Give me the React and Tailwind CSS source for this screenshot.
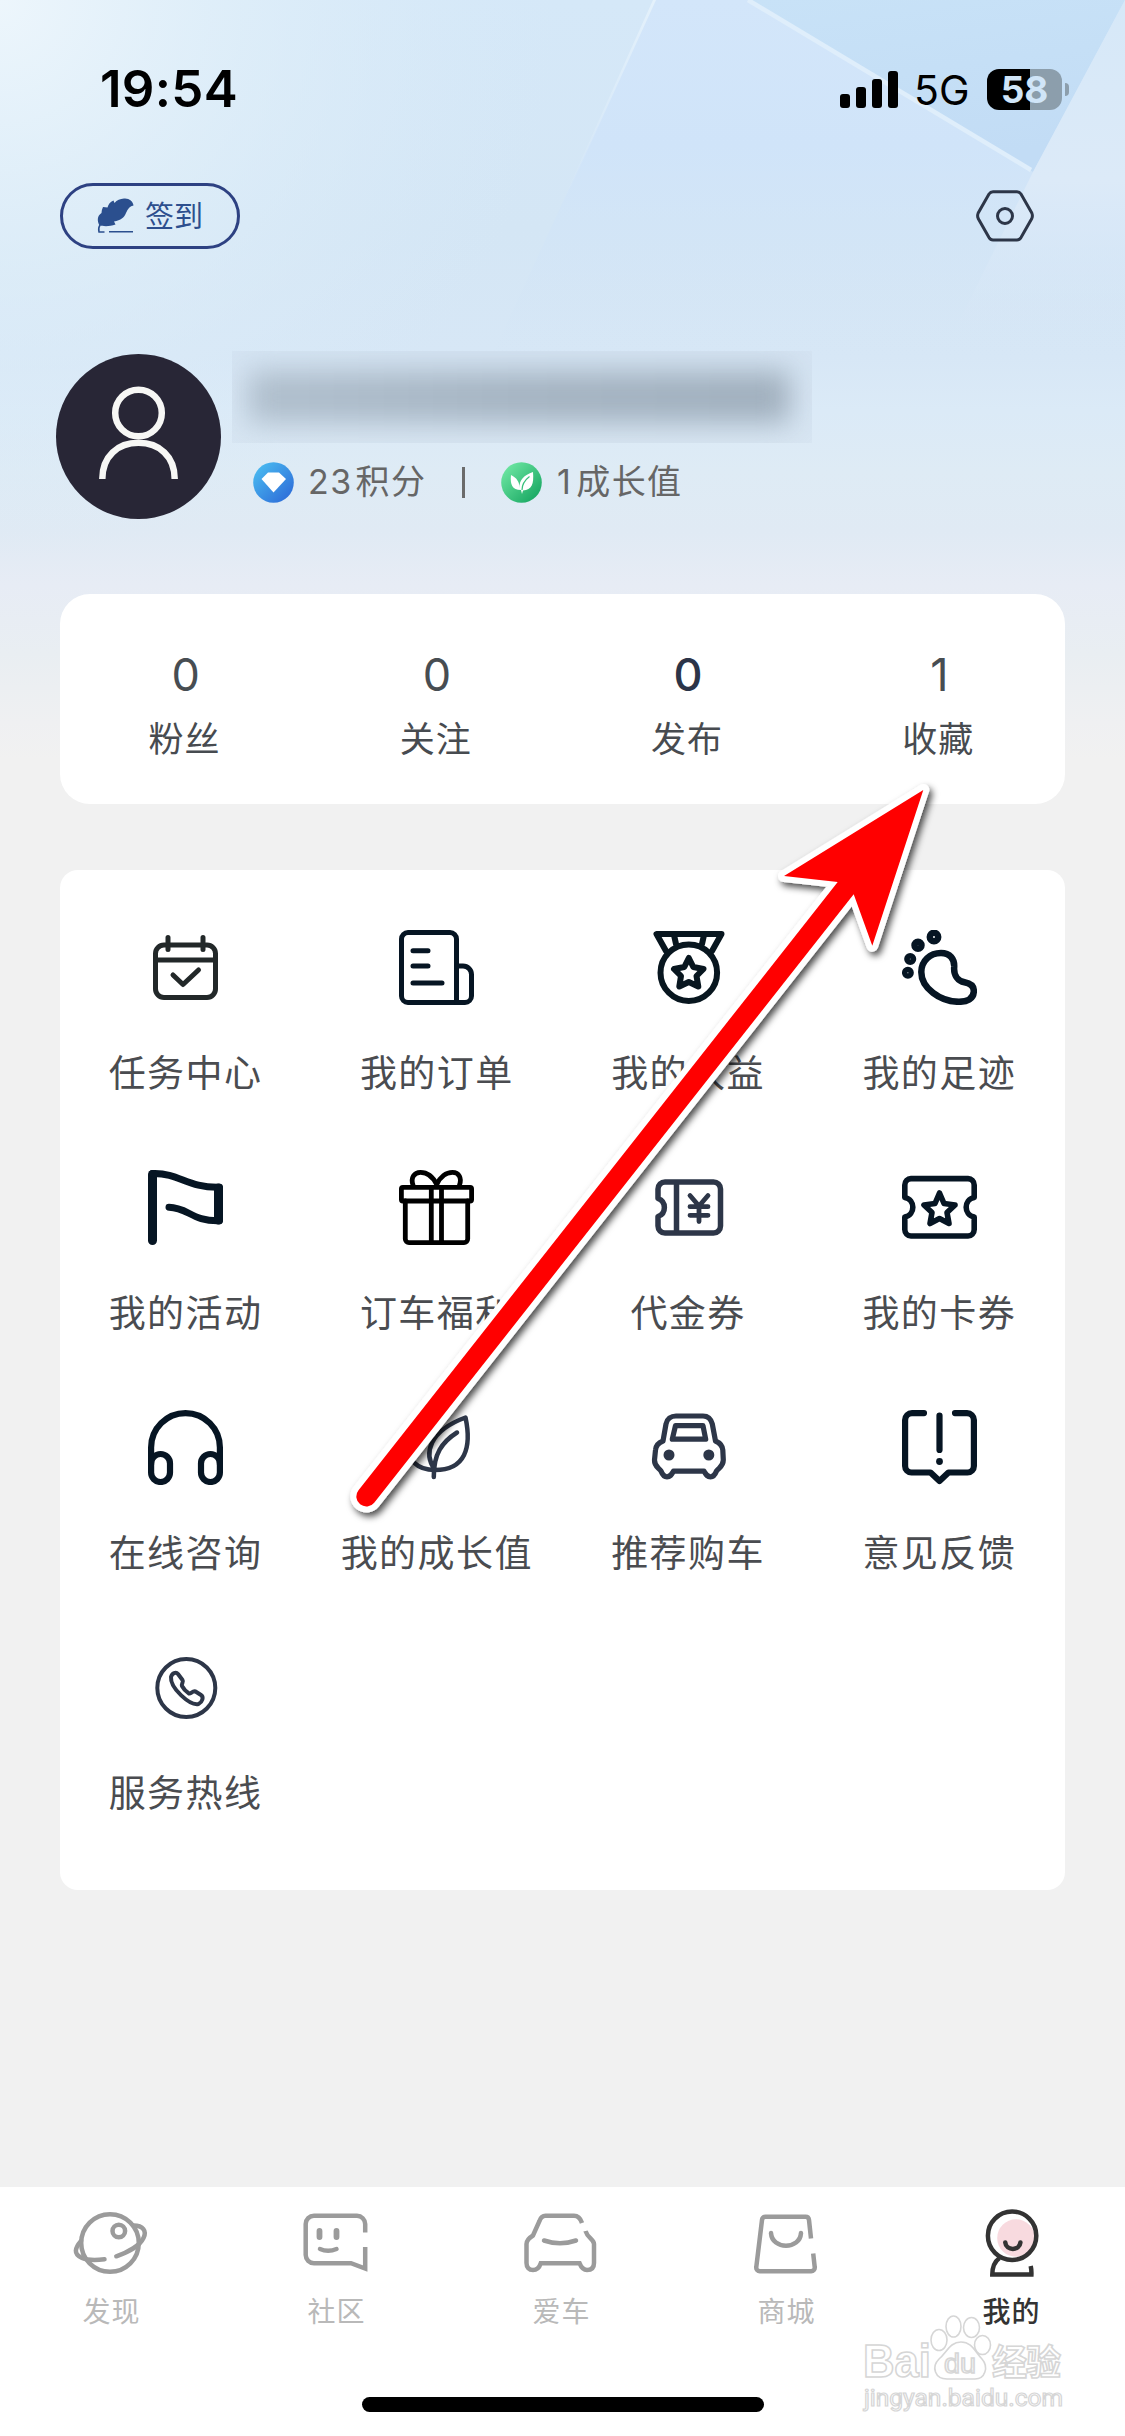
import React, { useState } from 'react'
import clsx from 'clsx'

const starPath = "M37.5 24 L42 34.5 L53 36 L45 43.5 L47 54.5 L37.5 49.5 L28 54.5 L30 43.5 L22 36 L33 34.5 Z"

const GridIcon = ({ children, color = "#061523", width = 5 }) => (
  <svg className="size-[75px]" viewBox="0 0 75 75" fill="none" stroke={color} strokeWidth={width} strokeLinecap="round" strokeLinejoin="round">
    {children}
  </svg>
)

const TabIcon = ({ children, active }) => (
  <svg className="w-[78px] h-[75px]" viewBox="0 0 78 75" fill="none" stroke={active ? "#333333" : "#9b9b9b"} strokeWidth="4.5">
    {children}
  </svg>
)

const services = [
  {
    label: "任务中心",
    icon: (
      <GridIcon color="#222829">
        <rect x="7.5" y="15" width="60" height="52.5" rx="8.5" />
        <path d="M7.5 30 H67.5 M20 7.5 V19.5 M55 7.5 V19.5 M25 45 L35 54.5 L50.5 40" />
      </GridIcon>
    ),
  },
  {
    label: "我的订单",
    icon: (
      <GridIcon>
        <path d="M57.5 72.5 H9 A6.5 6.5 0 0 1 2.5 66 V9 A6.5 6.5 0 0 1 9 2.5 H51 A6.5 6.5 0 0 1 57.5 9 Z" />
        <path d="M14 20.7 H29 M14 36 H29 M14 53 H43 M58 36 H64 A8.5 8.5 0 0 1 72.5 44.5 V66 A6.5 6.5 0 0 1 66 72.5 H57.5" />
      </GridIcon>
    ),
  },
  {
    label: "我的权益",
    icon: (
      <GridIcon color="#08161f" width={6}>
        <circle cx="37.8" cy="42.7" r="28.3" />
        <path d="M15 21 L5.5 4 H70.5 L61 21 M23 5 L25 14 M53 5 L51 14" />
        <path d="M37.8 28 L42.3 37 L52.5 39 L45.5 46 L47.3 56.5 L37.8 52 L28.3 56.5 L30 46 L23 39 L33.3 37 Z" />
      </GridIcon>
    ),
  },
  {
    label: "我的足迹",
    icon: (
      <GridIcon width={6.5}>
        <circle cx="32" cy="7" r="4.2" />
        <circle cx="16" cy="15.3" r="3.5" />
        <circle cx="8.2" cy="29" r="2.8" />
        <circle cx="5.9" cy="42.7" r="2.7" />
        <path d="M39 23 C48 23 52.6 29 52.2 37 C51.5 45.5 56 51 62.5 52.3 C69 53.5 72 57 71.8 61.5 C71.5 69 65 71.8 57 71.8 C38 71.8 19.3 58 19.3 42 C19.3 31 28 23 39 23 Z" />
      </GridIcon>
    ),
  },
  {
    label: "我的活动",
    icon: (
      <GridIcon width={7}>
        <path d="M4.5 4.5 V70.5" strokeWidth="9" />
        <path d="M4.5 3.5 C32 3 39 18 71.5 17.2 V50.8 C44 51.5 40 37.5 21 37.3" />
        <path d="M70.5 18 V50" strokeWidth="9" />
      </GridIcon>
    ),
  },
  {
    label: "订车福利",
    icon: (
      <GridIcon color="#000000" width={4.8}>
        <rect x="2.4" y="17.3" width="70.2" height="13.7" rx="1.5" />
        <path d="M6.3 31 V69 A3.7 3.7 0 0 0 10 72.6 H65 A3.7 3.7 0 0 0 68.7 69 V31 M32.3 18 V72 M42.5 18 V72" />
        <path d="M37.7 14.5 C34 7 28 2.4 21.5 2.4 C15 2.4 11.5 8 14 15 M37.7 14.5 C41 7 47 2.4 53.5 2.4 C60 2.4 63 8 60.5 15" />
      </GridIcon>
    ),
  },
  {
    label: "代金券",
    icon: (
      <GridIcon color="#2d3648" width={5.5}>
        <path d="M7 28.5 V19 A7 7 0 0 1 14 12 H62.5 A7 7 0 0 1 69.5 19 V56 A7 7 0 0 1 62.5 63 H14 A7 7 0 0 1 7 56 V46.5 C15.5 43.5 15.5 31.5 7 28.5 Z M25.5 12 V63" />
        <path d="M39 25.5 L48 36 L57 25.5 M48 36 V51.5 M39 36.7 H57 M39 45.3 H57" strokeWidth="4.8" />
      </GridIcon>
    ),
  },
  {
    label: "我的卡券",
    icon: (
      <GridIcon width={5.6}>
        <path d="M2.8 27.5 V15 A6.5 6.5 0 0 1 9 8.6 H66 A6.5 6.5 0 0 1 72.2 15 V27.5 C61.5 29.5 61.5 45 72.2 47 V59.5 A6.5 6.5 0 0 1 66 66 H9 A6.5 6.5 0 0 1 2.8 59.5 V47 C13.5 45 13.5 29.5 2.8 27.5 Z" />
        <path d={starPath} transform="translate(0 -1)" />
      </GridIcon>
    ),
  },
  {
    label: "在线咨询",
    icon: (
      <GridIcon width={6.2}>
        <path d="M3.1 54 V37.5 A34.4 34.4 0 0 1 71.9 37.5 V54" />
        <rect x="3.1" y="44" width="18.9" height="28" rx="9.4" />
        <rect x="53" y="44" width="18.9" height="28" rx="9.4" />
      </GridIcon>
    ),
  },
  {
    label: "我的成长值",
    icon: (
      <GridIcon color="#2d3648" width={4.5}>
        <path d="M66.5 7.5 C73 38 66 60 36 60 C24 44 30 21 66.5 7.5 Z M58 22.5 C43 32 34.5 44 34.8 67" />
        <path d="M36 60 C18 60 8 50 9 33" />
      </GridIcon>
    ),
  },
  {
    label: "推荐购车",
    icon: (
      <GridIcon color="#2d3648" width={5.2}>
        <path d="M25 6 H52 C57 6 60 9 61.3 14 L64.5 31 C69 33 71.5 36 71.8 40 L72.3 50 C72.3 56 69 57 65.5 61 C64 65 62 66.8 59.5 66.8 C56 66.8 55 64.5 53 61.2 H22.5 C20.5 64.5 19.5 66.8 16 66.8 C13 66.8 11.5 65 10 61 C6.5 57 3.3 56 3.5 50 L4.5 40 C4.8 36 7 33 12 31 L15 14 C16 9 20 6 25 6 Z" />
        <path d="M24.5 15.7 H52 L54.7 29.2 H21.3 Z" />
        <circle cx="18" cy="45" r="5.5" fill="#2d3648" stroke="none" />
        <circle cx="57.8" cy="45" r="5.5" fill="#2d3648" stroke="none" />
      </GridIcon>
    ),
  },
  {
    label: "意见反馈",
    icon: (
      <GridIcon width={6.2}>
        <path d="M22 3.1 H10 A7 7 0 0 0 3.1 10 V56 A6.5 6.5 0 0 0 9.5 62.5 H28.5 L37.5 71 L46.5 62.5 H65.5 A6.5 6.5 0 0 0 71.9 56 V10 A7 7 0 0 0 65 3.1 H53 M37.5 5.5 V40" />
        <circle cx="37.5" cy="51.5" r="3.4" fill="#061523" stroke="none" />
      </GridIcon>
    ),
  },
  {
    label: "服务热线",
    icon: (
      <GridIcon color="#2d3648" width={4}>
        <circle cx="38.3" cy="38" r="29" />
        <path d="M23 27 C24 23 28 21.5 30 24 L34.5 30 C36 32 33 34 34 36 C35.5 39 38 41.5 41 43.5 C43 44 44.5 40.5 47.5 41.5 L53 45 C56 47 54.5 52 50.5 54 C42 56 22 38 23 27 Z" />
      </GridIcon>
    ),
  },
]

const stats = [
  { label: "粉丝", value: 0 },
  { label: "关注", value: 0 },
  { label: "发布", value: 0, dark: true },
  { label: "收藏", value: 1 },
]

const tabs = [
  {
    label: "发现",
    drawing: (
      <>
        <circle cx="37" cy="38" r="28.8" />
        <circle cx="45.8" cy="26" r="6.3" />
        <path d="M60.5 20.5 C70 20.5 74 26 70.5 33 C67 40 56 47 43.3 51.3 M8 36 C2 43 0 49 9 53 C15 55.5 22 55.5 31.5 54.3" strokeLinecap="round" />
      </>
    ),
  },
  {
    label: "社区",
    drawing: (
      <>
        <path d="M67.2 27.5 V19 A8.3 8.3 0 0 0 59 10.8 H16 A8.3 8.3 0 0 0 7.7 19 V50 A8.3 8.3 0 0 0 16 58.2 H53 L67.2 63.5 V42" />
        <path d="M21.5 26 V32 M38.5 26 V32" strokeWidth="5.8" strokeLinecap="round" />
        <path d="M22 44 Q30 47.5 38.5 44" strokeLinecap="round" />
      </>
    ),
  },
  {
    label: "爱车",
    drawing: (
      <>
        <path d="M59 18 C57.5 13.5 55 10.8 51 10.8 H22.5 C19 10.8 17.5 13 16.5 16 L10 30.5 C6 33 3.5 35 3.5 39 V58 C3.5 62.5 6 65 10 65 C14.5 65 16.5 62 17.8 58.2 H56.5 C58 62 60 65 64 65 C68.5 65 71 62.5 71 58 V39 C71 34 64.5 33 62.5 26" />
        <path d="M21 35.5 Q37 41 53 35.5" strokeLinecap="round" />
      </>
    ),
  },
  {
    label: "商城",
    drawing: (
      <>
        <path d="M63 33.5 L61 15 A3.6 3.6 0 0 0 57.5 11.8 H17.5 A3.6 3.6 0 0 0 14 15 L8.3 62 A3.6 3.6 0 0 0 12 66.2 H63 A3.6 3.6 0 0 0 66.7 62 L65.2 48.5" />
        <path d="M23 28 C24 45 52 45 53 28" strokeLinecap="round" />
      </>
    ),
  },
  {
    label: "我的",
    drawing: (
      <>
        <circle cx="43" cy="33" r="18.8" fill="#f8dadf" stroke="none" />
        <circle cx="39.1" cy="30.7" r="24.2" />
        <path d="M32.3 37.5 C33 46 46.7 46 47.4 37.5" strokeLinecap="round" />
        <path d="M26.5 53 C21 57 19.3 62 19.3 69.5 H58.4 Q58.6 65 57.7 61" />
      </>
    ),
  },
]

const StatusBar = () => (
  <div className="flex h-[183px] items-start justify-between pl-[100px] pr-[56px] pt-[64px] text-black">
    <span className="font-[Inter,sans-serif] text-[51px] font-semibold leading-[50px] tracking-[0.3px]">19:54</span>
    <div className="flex items-center pt-[4px]">
      <div className="flex h-[37px] items-end gap-[6px]">
        <i className="h-[14px] w-[10px] rounded-[3px] bg-black" />
        <i className="h-[21px] w-[10px] rounded-[3px] bg-black" />
        <i className="h-[29px] w-[10px] rounded-[3px] bg-black" />
        <i className="h-[37px] w-[10px] rounded-[3px] bg-black" />
      </div>
      <span className="ml-[16px] mt-[2px] w-[56px] font-[Inter,sans-serif] text-[41px] leading-[41px]">5G</span>
      <div className="ml-[17px] flex h-[41px] w-[75px] items-center justify-center rounded-[12px] bg-linear-to-r from-black from-57% to-[#8c9eac] to-57% font-[Inter,sans-serif] text-[37px] font-bold leading-[41px] text-[#d0e5f8]">
        58
      </div>
      <i className="ml-[3px] h-[13px] w-[4px] rounded-r-full bg-[#8c9eac]" />
    </div>
  </div>
)

const Backdrop = () => (
  <svg className="absolute left-0 top-0 h-[760px] w-full" viewBox="0 0 1125 760" preserveAspectRatio="none">
    <defs>
      <linearGradient id="sky" x1="0" y1="0" x2="0" y2="1">
        <stop offset="0" stopColor="#d5e8f8" />
        <stop offset="0.3" stopColor="#d4e6f5" />
        <stop offset="0.47" stopColor="#d7e7f6" />
        <stop offset="0.54" stopColor="#dbeaf7" />
        <stop offset="0.62" stopColor="#deebf5" />
        <stop offset="0.7" stopColor="#e0eaf4" />
        <stop offset="0.77" stopColor="#e7ecf5" />
        <stop offset="0.86" stopColor="#e9eef2" />
        <stop offset="0.95" stopColor="#eff0f2" />
        <stop offset="1" stopColor="#f1f1f1" />
      </linearGradient>
      <radialGradient id="glow" gradientUnits="userSpaceOnUse" cx="0" cy="0" r="560">
        <stop offset="0" stopColor="#edf6fc" />
        <stop offset="0.45" stopColor="#e0eff9" stopOpacity="0.7" />
        <stop offset="1" stopColor="#d8eaf8" stopOpacity="0" />
      </radialGradient>
      <linearGradient id="pane" x1="0" y1="0" x2="0" y2="1">
        <stop offset="0" stopColor="#d3e6fa" />
        <stop offset="0.4" stopColor="#d0e4f9" />
        <stop offset="1" stopColor="#d3e5f5" stopOpacity="0" />
      </linearGradient>
      <linearGradient id="side" x1="0" y1="0" x2="0" y2="1">
        <stop offset="0" stopColor="#d6e8f8" />
        <stop offset="0.5" stopColor="#dceaf8" />
        <stop offset="1" stopColor="#d6e6f6" stopOpacity="0" />
      </linearGradient>
      <linearGradient id="shard" x1="0" y1="0" x2="0.3" y2="1">
        <stop offset="0" stopColor="#c8e2f7" />
        <stop offset="1" stopColor="#c2dcf5" />
      </linearGradient>
      <linearGradient id="edge" x1="0" y1="0" x2="0" y2="1">
        <stop offset="0" stopColor="#e4f1fb" />
        <stop offset="1" stopColor="#e0eefb" stopOpacity="0" />
      </linearGradient>
    </defs>
    <rect width="1125" height="760" fill="url(#sky)" />
    <rect width="1125" height="560" fill="url(#glow)" />
    <path d="M656 0 H1125 V360 H490 Z" fill="url(#pane)" />
    <path d="M656 0 L565 200 L563 200 L653 0 Z" fill="url(#edge)" />
    <path d="M748 0 H1125 L1033 172 Z" fill="url(#shard)" />
    <path d="M1125 0 L1033 172 L940 360 H1125 Z" fill="url(#side)" />
    <path d="M748 0 L1031 170" stroke="#dfeefb" strokeWidth="4.5" />
  </svg>
)

const Arrow = () => (
  <svg className="pointer-events-none absolute left-[340px] top-[770px] h-[760px] w-[620px]" viewBox="340 770 620 760">
    <defs>
      <filter id="arrowShadow" x="-10%" y="-10%" width="120%" height="120%">
        <feDropShadow dx="3" dy="4" stdDeviation="3.5" floodColor="#000000" floodOpacity="0.7" />
      </filter>
    </defs>
    <path
      d="M923.3 790 L784 876 L837.7 882 L358.5 1490.3 A10 10 0 0 0 374.2 1502.7 L853.7 894.3 L872.3 945.7 Z"
      fill="#ff0000"
      stroke="#ffffff"
      strokeWidth="12"
      strokeLinejoin="round"
      paintOrder="stroke"
      filter="url(#arrowShadow)"
    />
  </svg>
)

const Watermark = () => (
  <svg className="pointer-events-none absolute left-[855px] top-[2305px] h-[120px] w-[220px]" viewBox="855 2305 220 120" fill="#ffffff" stroke="#d6d6d6" strokeWidth="1.6">
    <g fontFamily="'Liberation Sans', sans-serif" fontWeight="bold">
      <text x="863" y="2377" fontSize="46" textLength="68" lengthAdjust="spacingAndGlyphs">Bai</text>
      <ellipse cx="939" cy="2340" rx="8" ry="10.5" />
      <ellipse cx="953.5" cy="2326.5" rx="7.5" ry="10.5" />
      <ellipse cx="971.5" cy="2327.5" rx="8" ry="10" />
      <ellipse cx="982.5" cy="2345" rx="8" ry="9.5" />
      <path d="M961 2342 C972 2342 975 2352 982 2359 C989 2367 985 2379 975 2379 C966 2379 956 2379 947 2379 C935 2379 931 2367 939 2359 C947 2352 950 2342 961 2342 Z" />
      <text x="944" y="2373" fontSize="27" fontWeight="normal" textLength="32" lengthAdjust="spacingAndGlyphs">du</text>
    </g>
    <text x="992" y="2375" fontSize="35" fontWeight="bold" fontFamily="'Noto Sans CJK SC', sans-serif" textLength="69">经验</text>
    <text x="864" y="2406" fontSize="23" strokeWidth="1.2" fontFamily="Roboto, sans-serif" textLength="199" lengthAdjust="spacingAndGlyphs">jingyan.baidu.com</text>
  </svg>
)

const App = () => {
  const [activeTab, setActiveTab] = useState("我的")

  return (
    <div className="relative flex h-[2436px] w-[1125px] flex-col overflow-hidden bg-[#f1f1f1] font-[Inter,'Noto_Sans_CJK_SC',sans-serif]">
      <Backdrop />

      <div className="relative">
        <StatusBar />

        {/* sign in + settings */}
        <div className="flex h-[66px] items-center justify-between pl-[60px] pr-[91px]">
          <button className="flex h-[66px] w-[180px] items-center rounded-full border-3 border-[#2d4182] pl-[34px] text-[29px] leading-none text-[#2d4f8e]">
            <svg className="mr-[11px] h-[36px] w-[37px]" viewBox="0 0 37 36" fill="#2b4f8e">
              <path d="M36.5 7.5 C36 3 32 0 27 0.5 C23 1 20 2 17.5 5 L16.5 2.5 C13 4 11.5 6 10.5 9.5 L6 9 C5 11 4.5 13 4.5 15 C0 18 0 23 2.5 27.5 C5 28 12 29 18.5 26.5 L17 23.5 C24 22 27 20 29 15 C31 10.5 33 8 36.5 7.5 Z" />
              <path d="M3 27 C1 30 1.5 32 2 34 H7.5 M12 33.7 H36" stroke="#2b4f8e" strokeWidth="1.5" fill="none" />
            </svg>
            签到
          </button>
          <svg className="h-[52px] w-[58px]" viewBox="0 0 58 52" fill="none" stroke="#2d3648" strokeWidth="3">
            <path d="M17 1.8 H41 Q43.5 1.8 45 4 L55.8 23 Q57 25.8 55.8 28.5 L45 47.5 Q43.5 50 41 50 H17 Q14.5 50 13 47.5 L2.2 28.5 Q1 25.8 2.2 23 L13 4 Q14.5 1.8 17 1.8 Z" />
            <circle cx="29" cy="26" r="7.5" />
          </svg>
        </div>

        {/* profile */}
        <div className="mt-[102px] flex h-[171px] pl-[56px]">
          <svg className="size-[165px] mt-[3px]" viewBox="0 0 165 165" fill="none" stroke="#f7f7f5" strokeWidth="6.5">
            <circle cx="82.5" cy="82.5" r="82.5" fill="#282636" stroke="none" />
            <circle cx="82.5" cy="59" r="23.3" />
            <path d="M46.3 125 C46.3 102 62 88.8 82.5 88.8 C103 88.8 118.7 102 118.7 125" />
          </svg>
          <div className="ml-[11px]">
            <div className="h-[92px] w-[580px] overflow-hidden bg-[#cfdeec]/35 pl-[16px] pr-[22px] py-[20px]">
              <div className="h-[52px] bg-linear-to-r from-[#b0bfcd] via-[#a5b4c2] to-[#a0afbd] blur-[14px]" />
            </div>
            <div className="mt-[18px] flex h-[42px] items-center pl-[21px] text-[34px] leading-none tracking-[1.4px] text-[#666666]">
              <svg className="size-[41px]" viewBox="0 0 41 41">
                <defs>
                  <linearGradient id="gem" x1="0" y1="0" x2="1" y2="1">
                    <stop offset="0" stopColor="#4dc3f3" />
                    <stop offset="1" stopColor="#2a64d6" />
                  </linearGradient>
                </defs>
                <circle cx="20.5" cy="20.5" r="20.3" fill="url(#gem)" />
                <path d="M15 10.5 H26 L33 17 L20.5 30.5 L8.5 17 Z" fill="#ffffff" />
              </svg>
              <span className="ml-[14px] w-[120px] whitespace-nowrap">23<span className="ml-[3px]">积分</span></span>
              <i className="ml-[34px] h-[31px] w-[3px] bg-[#6b6b6b]" />
              <svg className="ml-[36px] size-[41px]" viewBox="0 0 41 41">
                <defs>
                  <linearGradient id="growth" x1="0" y1="0" x2="1" y2="1">
                    <stop offset="0" stopColor="#78eeaa" />
                    <stop offset="1" stopColor="#0d9f5a" />
                  </linearGradient>
                </defs>
                <circle cx="20.5" cy="20.5" r="20.3" fill="url(#growth)" />
                <path d="M20 28 C11 28 9 22 10 13 C16 16 18.5 20 18.5 26 C18 18 23 13 32 10 C33 22 31 28 22 28.5 L21 32 Z" fill="#ffffff" />
                <path d="M21 28 C21 22 24 18 28.5 14.5" fill="none" stroke="#35c07a" strokeWidth="1.2" />
              </svg>
              <span className="ml-[15px] whitespace-nowrap">1<span className="ml-[4px]">成长值</span></span>
            </div>
          </div>
        </div>
      </div>

      {/* counters */}
      <div className="relative mx-[60px] mt-[72px] grid h-[210px] shrink-0 grid-cols-4 rounded-[30px] bg-white pt-[56px]">
        {stats.map((item) => (
          <div key={item.label} className="flex flex-col items-center">
            <span className={clsx("text-[45px] leading-[50px]", item.dark ? "font-medium text-[#2b3448]" : "text-[#474d52]")}>{item.value}</span>
            <span className="mt-[19px] mr-[2px] text-[35px] leading-[40px] tracking-[1.2px] text-[#474b50]">{item.label}</span>
          </div>
        ))}
      </div>

      {/* services */}
      <div className="relative mx-[60px] mt-[66px] grid h-[1020px] shrink-0 auto-rows-[240px] grid-cols-4 rounded-[18px] bg-white pt-[60px]">
        {services.map((item) => (
          <div key={item.label} className="flex flex-col items-center">
            {item.icon}
            <span className="mt-[47px] whitespace-nowrap text-[37px] leading-[44px] tracking-[1.5px] text-[#4a4c50]">{item.label}</span>
          </div>
        ))}
      </div>

      {/* bottom tabs */}
      <div className="relative mt-auto flex h-[249px] shrink-0 flex-col items-center bg-white pt-[18px]">
        <div className="grid w-full grid-cols-5">
          {tabs.map((tab) => (
            <button key={tab.label} onClick={() => setActiveTab(tab.label)} className="flex flex-col items-center pr-[2px]">
              <TabIcon active={activeTab === tab.label}>{tab.drawing}</TabIcon>
              <span className={clsx("mt-[14px] text-[28px] leading-[36px] tracking-[1px]", activeTab === tab.label ? "font-medium text-[#333333]" : "text-[#b9b9b9]")}>
                {tab.label}
              </span>
            </button>
          ))}
        </div>
        <div className="mt-[67px] h-[15px] w-[402px] rounded-full bg-black" />
      </div>

      <Arrow />
      <Watermark />
    </div>
  )
}

export default App
